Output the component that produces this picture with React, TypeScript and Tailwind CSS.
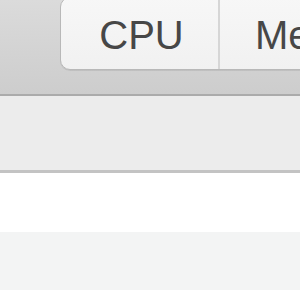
export default function App() {
  return (
    <div className="w-[300px] h-[300px] overflow-hidden bg-white font-['Liberation_Sans',Arial,sans-serif]">
      {/* Toolbar */}
      <div className="h-[96px] bg-gradient-to-b from-[#dbdbdb] to-[#cdcdcd] border-b-2 border-[#ababab] pl-[60px] flex items-start">
        <div className="-mt-[3px] h-[73px] flex rounded-[10px] border border-[#b8b8b8] bg-gradient-to-b from-[#f7f7f7] to-[#f1f1f1] shadow-[0_1px_0_rgba(0,0,0,0.08)]">
          <div className="w-[159px] shrink-0 border-r-2 border-[#d6d6d6] flex items-center justify-center pl-[4px] pt-[3px] text-[40px] text-[#474747]">
            CPU
          </div>
          <div className="w-[200px] shrink-0 pl-[35px] flex items-center pt-[3px] text-[40px] text-[#474747]">
            Memory
          </div>
        </div>
      </div>

      {/* Filter bar */}
      <div className="h-[77px] bg-[#ececec] border-b-[3px] border-[#c3c3c3]" />

      {/* Rows */}
      <div className="h-[59px] bg-white" />
      <div className="h-[58px] bg-[#f3f4f4]" />
      <div className="h-[20px] bg-white" />
    </div>
  );
}
